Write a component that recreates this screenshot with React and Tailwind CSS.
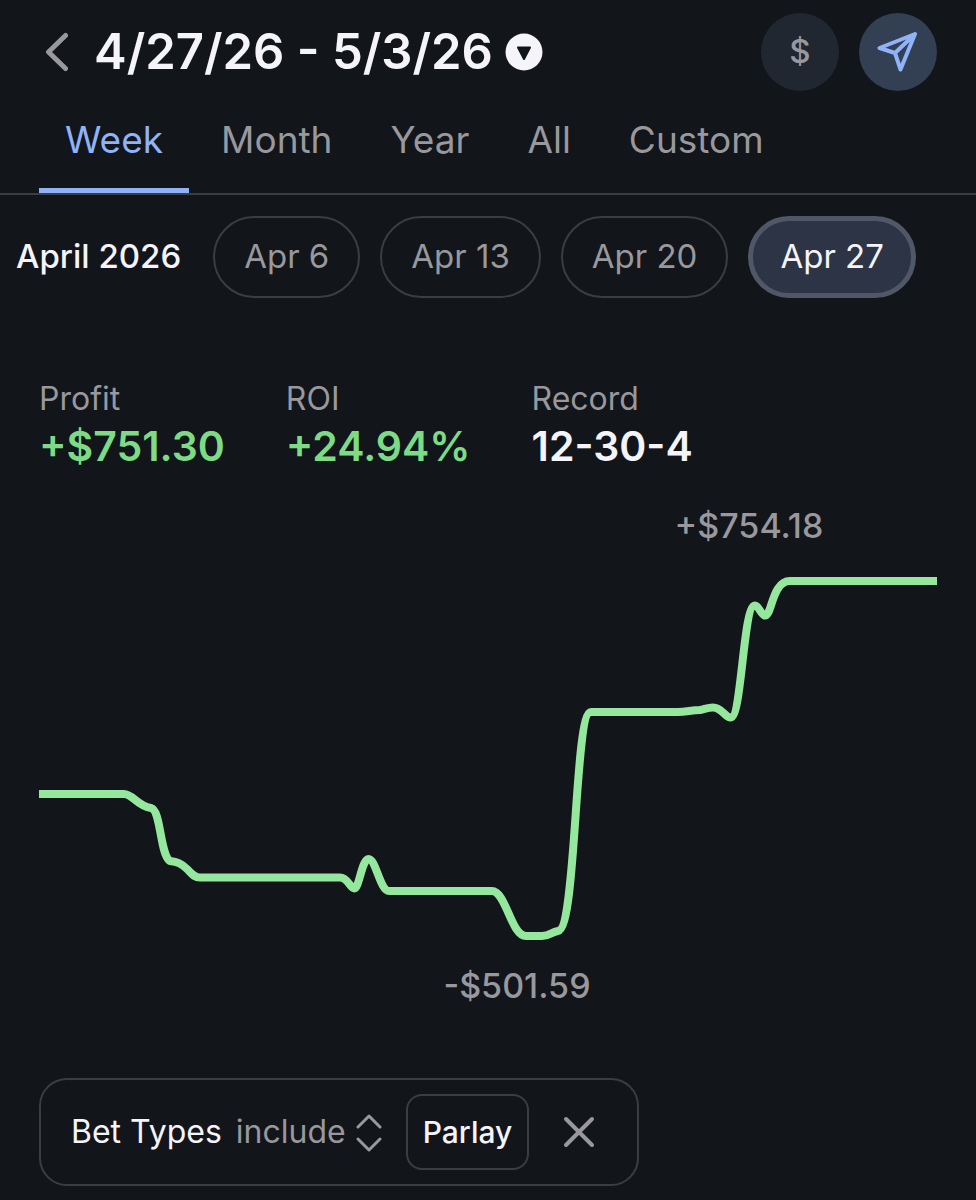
import React, { useState } from 'react';

const tabs = ['Week', 'Month', 'Year', 'All', 'Custom'];
const weeks = ['Apr 6', 'Apr 13', 'Apr 20', 'Apr 27'];

const stats = [
  { label: 'Profit', value: '+$751.30', color: 'text-[#7edb85]' },
  { label: 'ROI', value: '+24.94%', color: 'text-[#7edb85]' },
  { label: 'Record', value: '12-30-4', color: 'text-[#f4f4fa]' },
];

const Header = () => (
  <header className="flex items-center justify-between pt-[13px] pr-[39px] pl-[42px]">
    <div className="flex items-center gap-[26px]">
      <button type="button" aria-label="Back" className="text-[#98989d]">
        <svg width="26" height="40" viewBox="0 0 26 40" fill="none" stroke="currentColor" strokeWidth="5" strokeLinecap="round" strokeLinejoin="round">
          <path d="M23.500 3.500L6.500 20L23.500 36.500" />
        </svg>
      </button>
      <button type="button" className="flex items-center gap-3 text-[49px] leading-[60px] font-semibold text-[#f4f4fa]">
        4/27/26 - 5/3/26
        <svg width="38" height="38" viewBox="0 0 38 38">
          <circle cx="19" cy="19" r="18.5" fill="#f4f4fa" />
          <path d="M13 14.5h12L19 26z" fill="#12151a" stroke="#12151a" strokeWidth="2" strokeLinejoin="round" />
        </svg>
      </button>
    </div>
    <div className="flex gap-5">
      <button type="button" aria-label="Show in dollars" className="size-[78px] rounded-full bg-[#212731] text-[33px] font-medium text-[#98989d]">
        $
      </button>
      <button type="button" aria-label="Share" className="flex size-[78px] items-center justify-center rounded-full bg-[#333f53] text-[#8fb2f8]">
        <svg width="42" height="42" viewBox="0 0 42 42" fill="none" stroke="currentColor" strokeWidth="4" strokeLinecap="round" strokeLinejoin="round">
          <path d="M38 3L2.500 17L18 22L23.500 38.500ZM38 3L18 22" />
        </svg>
      </button>
    </div>
  </header>
);

const ProfitChart = () => (
  <svg viewBox="0 0 898 520" className="block h-auto w-full" role="img" aria-label="Profit over time">
    <path
      fill="none"
      stroke="#94e79c"
      strokeWidth="8"
      strokeLinejoin="round"
      d="M0 294H85C94 294 98 306 112 308C122 310 121 355 131 361C138 362 142 363 148 369C153 374 155 377.500 161 377.500H301C309 377.500 311 388.500 315.500 388.500C320 388.500 323 359 329.500 359C337 359 341 391 350 391H453C467 391 472 436 487 436H503C511 436 512 432 519 431C538 428 535 212 552 212H639C647 212 653 210 661 210C666 209 669 207.500 674 207.500C683 207.500 686 217.500 691.500 217.500C703 217.500 704 105.500 716 105.500C720 105.500 722 115.500 726 115.500C733 115.500 733 81 751 81H898"
    />
    <text x="710" y="38" textAnchor="middle" className="fill-[#98989d] text-[34px] font-medium">+$754.18</text>
    <text x="478" y="498" textAnchor="middle" className="fill-[#98989d] text-[34px] font-medium">-$501.59</text>
  </svg>
);

const BetTypeFilter = () => (
  <div className="flex w-fit items-center rounded-[28px] border-2 border-[#3a3d42] py-[14px] pl-[30px] pr-[42px]">
    <label htmlFor="betTypes" className="mr-[14px] text-[32px] leading-10 text-[#f4f4fa]">Bet Types</label>
    <div className="relative mr-6 flex items-center">
      <select id="betTypes" className="field-sizing-content appearance-none bg-transparent pr-9 text-[32px] leading-10 text-[#98989d]">
        <option>include</option>
        <option>exclude</option>
      </select>
      <svg width="26" height="40" viewBox="0 0 26 40" className="pointer-events-none absolute right-0" fill="none" stroke="#98989d" strokeWidth="3" strokeLinecap="round" strokeLinejoin="round">
        <path d="M2 15L13 4L24 15M2 27L13 38L24 27" />
      </svg>
    </div>
    <button type="button" className="mr-[34px] rounded-2xl border-2 border-[#3a3d42] px-[15px] py-4 text-[30px] leading-10 font-medium text-[#f4f4fa]">
      Parlay
    </button>
    <button type="button" aria-label="Remove filter" className="text-[#98989d]">
      <svg width="32" height="32" viewBox="0 0 32 32" fill="none" stroke="currentColor" strokeWidth="4" strokeLinecap="round">
        <path d="M3 3L29 29M29 3L3 29" />
      </svg>
    </button>
  </div>
);

const App = () => {
  const [tab, setTab] = useState('Week');
  const [week, setWeek] = useState('Apr 27');

  return (
    <div className="min-h-screen overflow-hidden bg-[#12151a] font-['Inter',sans-serif]">
      <Header />

      {/* Period tabs */}
      <nav className="mt-[15px] flex gap-[6px] border-b-2 border-[#3a3d42] px-[39px]">
        {tabs.map((name) => (
          <button
            key={name}
            type="button"
            onClick={() => setTab(name)}
            className={`border-b-[5px] px-[26px] pt-[10px] pb-6 text-[37px] leading-[48px] ${
              tab === name ? 'border-[#8fb2f8] text-[#8fb2f8]' : 'border-transparent text-[#98989d]'
            }`}
          >
            {name}
          </button>
        ))}
      </nav>

      {/* Weeks of the month */}
      <div className="flex items-center gap-5 whitespace-nowrap px-4 pt-[21px]">
        <h2 className="mr-3 text-[33px] font-medium text-[#f4f4fa]">April 2026</h2>
        {weeks.map((name) => (
          <button
            key={name}
            type="button"
            onClick={() => setWeek(name)}
            className={`flex h-[82px] items-center rounded-full text-[33px] ${
              week === name
                ? 'border-[5px] border-[#505867] bg-[#2d3445] px-[27px] text-[#f4f4fa]'
                : 'border-2 border-[#3a3d42] px-[29px] text-[#98989d]'
            }`}
          >
            {name}
          </button>
        ))}
      </div>

      <main className="px-[39px] pt-[79px]">
        <dl className="flex gap-[61px]">
          {stats.map((stat) => (
            <div key={stat.label}>
              <dt className="text-[32px] leading-[44px] text-[#98989d]">{stat.label}</dt>
              <dd className={`text-[41px] leading-[50px] font-semibold ${stat.color}`}>{stat.value}</dd>
            </div>
          ))}
        </dl>
        <div className="mt-[29px]">
          <ProfitChart />
        </div>
        <div className="mt-[58px] pb-3">
          <BetTypeFilter />
        </div>
      </main>
    </div>
  );
};

export default App;
